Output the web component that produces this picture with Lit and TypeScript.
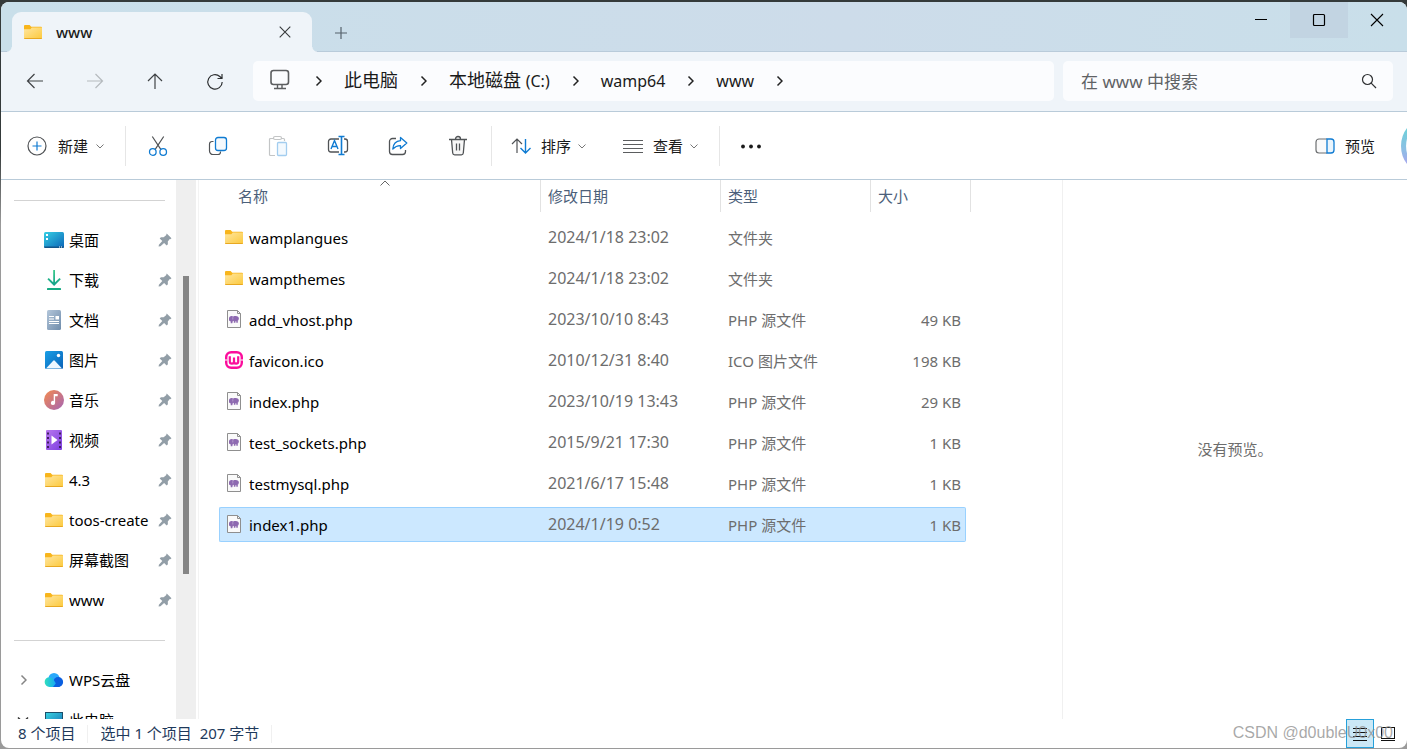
import { LitElement, html, css, svg, nothing } from "lit";
import { customElement, state } from "lit/decorators.js";
import { classMap } from "lit/directives/class-map.js";

type Kind = "folder" | "php" | "wamp";

interface FileRow {
  name: string;
  kind: Kind;
  date: string;
  type: string;
  size: string;
}

const FILES: FileRow[] = [
  { name: "wamplangues", kind: "folder", date: "2024/1/18 23:02", type: "文件夹", size: "" },
  { name: "wampthemes", kind: "folder", date: "2024/1/18 23:02", type: "文件夹", size: "" },
  { name: "add_vhost.php", kind: "php", date: "2023/10/10 8:43", type: "PHP 源文件", size: "49 KB" },
  { name: "favicon.ico", kind: "wamp", date: "2010/12/31 8:40", type: "ICO 图片文件", size: "198 KB" },
  { name: "index.php", kind: "php", date: "2023/10/19 13:43", type: "PHP 源文件", size: "29 KB" },
  { name: "test_sockets.php", kind: "php", date: "2015/9/21 17:30", type: "PHP 源文件", size: "1 KB" },
  { name: "testmysql.php", kind: "php", date: "2021/6/17 15:48", type: "PHP 源文件", size: "1 KB" },
  { name: "index1.php", kind: "php", date: "2024/1/19 0:52", type: "PHP 源文件", size: "1 KB" },
];

const box = (w: number, h: number, body: unknown) =>
  html`<svg width=${w} height=${h} viewBox="0 0 ${w} ${h}" fill="none" aria-hidden="true">${body}</svg>`;

const folder = () => box(20, 20, svg`
  <defs><linearGradient id="fg" x1="0" y1="0" x2="1" y2="1"><stop offset="0" stop-color="#ffe6a0"/><stop offset="1" stop-color="#fcc93c"/></linearGradient></defs>
  <path d="M1 4a1 1 0 0 1 1-1h4.6l1.6 1.8H18a1 1 0 0 1 1 1V8H1z" fill="#f8b51c"/>
  <path d="M1 7.2h6.4l1.4-1.6H19V16a1 1 0 0 1-1 1H2a1 1 0 0 1-1-1z" fill="url(#fg)"/>
  <path d="M1 16h18a1 1 0 0 1-1 1H2a1 1 0 0 1-1-1z" fill="#e8a821"/>`);

const php = () => box(20, 20, svg`
  <path d="M3.500 1.500h10l3 3v14h-13z" fill="#fafafa" stroke="#8f8f8f"/>
  <path d="M13.500 1.500v3h3" stroke="#8f8f8f"/>
  <path d="M5 9.500C5 8 6 7 7.500 7c.9 0 1.300.3 1.700.6C10 7 10.800 7 11.800 7c1.900 0 3.100 1 3.100 2.600l-.5 1.600-.6.200v2.300h-1.500v-1.500h-.9v1.500H9.800v-1.700l-.9-.3-.6 2.500H6.700v-1.600L5 11.500z" fill="#8d69b0"/>
  <path d="M8.800 8.200v2.300" stroke="#c9b8da" stroke-width=".6"/>`);

const wamp = () => box(20, 20, svg`
  <rect x="2.200" y="2.200" width="15.600" height="15.600" rx="5" fill="#fff" stroke="#fb0d9c" stroke-width="2.400"/>
  <path d="M1 10h2.500M16.500 10H19" stroke="#fff" stroke-width="1.200"/>
  <path d="M5.800 6.200v5.300a2.100 2.100 0 0 0 4.200 0V7.500M10 11.500a2.100 2.100 0 0 0 4.200 0V6.200" stroke="#fb0d9c" stroke-width="2.200"/>`);

const desktop = () => box(20, 20, svg`
  <defs><linearGradient id="dg" x1="0" y1="0" x2="1" y2="1"><stop offset="0" stop-color="#35cfe4"/><stop offset="1" stop-color="#0c65b8"/></linearGradient></defs>
  <rect y="2" width="20" height="16" rx="1.500" fill="url(#dg)"/>
  <path d="M0 16.500h20a1.500 1.500 0 0 1-1.500 1.500h-17A1.500 1.500 0 0 1 0 16.500z" fill="#13558a"/>
  <path d="M2 4h2v2H2zM2 8h2v2H2z" fill="#fff"/><path d="M15 17h1M17 17h1" stroke="#fff"/>`);

const download = () => box(20, 20, svg`
  <defs><linearGradient id="wg" x1="0" y1="0" x2="0" y2="1"><stop offset="0" stop-color="#3ccb8c"/><stop offset="1" stop-color="#12a08a"/></linearGradient></defs>
  <path d="M9.200 0h1.800v12.300l4.500-4.400 1.300 1.300-6.700 6.700L3.400 9.200l1.300-1.300 4.500 4.400z" fill="url(#wg)"/>
  <rect x="3" y="18" width="14" height="2" rx=".6" fill="#17ab83"/>`);

const doc = () => box(20, 20, svg`
  <defs><linearGradient id="og" x1="0" y1="0" x2="1" y2="1"><stop offset="0" stop-color="#b3c6da"/><stop offset="1" stop-color="#6f8cab"/></linearGradient></defs>
  <rect x="3" width="14" height="20" rx="1.500" fill="url(#og)"/>
  <path d="M5 6.500h5M5 9h5M5 11.500h10M5 13.500h10" stroke="#fff" stroke-width="1.200"/><path d="M11.500 6H15v3.500h-3.500z" fill="#fff"/>`);

const picture = () => box(20, 20, svg`
  <defs><linearGradient id="pg" x1="0" y1="0" x2="1" y2="1"><stop offset="0" stop-color="#199fe6"/><stop offset="1" stop-color="#0b62b8"/></linearGradient></defs>
  <rect x="1" y="1" width="18" height="18" rx="1.500" fill="url(#pg)"/>
  <path d="M2 18.500l7.200-7.800a1.100 1.100 0 0 1 1.600 0L18 18.500z" fill="#eef7ff"/><circle cx="14.500" cy="5.500" r="1.700" fill="#fff"/>`);

const music = () => box(20, 20, svg`
  <defs><linearGradient id="mg" x1="0" y1="0" x2="1" y2="1"><stop offset="0" stop-color="#f48b4e"/><stop offset="1" stop-color="#a564b4"/></linearGradient></defs>
  <circle cx="10" cy="10" r="10" fill="url(#mg)"/>
  <path d="M9.700 4h4v2.300h-2.600v6.600a2.100 2.100 0 1 1-1.400-2z" fill="#fff"/>`);

const video = () => box(20, 20, svg`
  <defs><linearGradient id="vg" x1="0" y1="0" x2="1" y2="1"><stop offset="0" stop-color="#b877ee"/><stop offset="1" stop-color="#7d3fe0"/></linearGradient></defs>
  <rect x="2" width="16" height="20" rx="1" fill="url(#vg)"/>
  <path d="M4 2.500v16M16 2.500v16" stroke="#40205f" stroke-width="2" stroke-dasharray="2 2.500"/>
  <path d="M7.500 5.500l6 4.500-6 4.500z" fill="#fff"/>`);

const cloud = () => box(20, 20, svg`
  <defs><linearGradient id="cg" x1="0" y1="0" x2="1" y2="0"><stop offset="0" stop-color="#2fe0bd"/><stop offset="1" stop-color="#129cff"/></linearGradient></defs>
  <circle cx="10" cy="8.500" r="5.500" fill="#2aa9fb"/><circle cx="14.200" cy="12" r="4.900" fill="#0a5fe0"/>
  <path d="M5.500 7.200c2 0 3 .8 4 2.300l4.500 7.400H5.500a4.850 4.850 0 0 1 0-9.700z" fill="url(#cg)"/>
  <path d="M9 16.900l5.200-6.500 2 6.100-2 .4z" fill="#0a5fe0"/>`);

const pc = () => box(20, 20, svg`
  <defs><linearGradient id="kg" x1="0" y1="0" x2="1" y2="1"><stop offset="0" stop-color="#38d4e0"/><stop offset="1" stop-color="#1673b8"/></linearGradient></defs>
  <rect x="1.500" y="2.500" width="17" height="13" fill="url(#kg)" stroke="#1a4f6b"/>`);

const pin = () => box(14, 14, svg`
  <path d="M8.700.5l4.800 4.800-1.200.9-.5-.1-2 2.500.1 2.700-1.200 1.200-2.600-2.600-3.600 3.400-1.900.3.300-1.900L4.300 8 1.700 5.400l1.200-1.200 2.700.1 2.500-2.100z" fill="#929ea7"/>`);

const chevR = (color: string) => box(7, 12, svg`<path d="M1.500 1.500L6 6l-4.500 4.500" stroke=${color} stroke-width="1.500"/>`);
const chevD = () => box(8, 8, svg`<path d="M.5 2.500L4 6l3.500-3.500" stroke="#777"/>`);

const S = "#505356";
const B = "#0f7bd2";
const T = {
  back: box(20, 20, svg`<path d="M18 10H2.500M9.500 3l-7 7 7 7" stroke="#3f4245" stroke-width="1.200"/>`),
  forward: box(20, 20, svg`<path d="M2 10h15.500M10.500 3l7 7-7 7" stroke="#b5babe" stroke-width="1.200"/>`),
  up: box(20, 20, svg`<path d="M10 18V3M3 10l7-7 7 7" stroke="#3f4245" stroke-width="1.200"/>`),
  reload: box(20, 20, svg`<path d="M17.200 11A7.200 7.200 0 1 1 14.800 5.500L17 7.500M17 3v4.500h-4.500" stroke="#2d2f31" stroke-width="1.200"/>`),
  monitor: box(22, 22, svg`<rect x="2" y="1.500" width="17.500" height="14" rx="2.500" stroke="#5c5e60" stroke-width="1.600"/><path d="M8.500 16v3M13 16v3M5 19.500h12" stroke="#5c5e60" stroke-width="1.400"/>`),
  search: box(16, 16, svg`<circle cx="6.500" cy="6.500" r="5" stroke="#2f3133" stroke-width="1.200"/><path d="M10.200 10.200L15 15" stroke="#2f3133" stroke-width="1.200"/>`),
  add: box(20, 20, svg`<circle cx="10" cy="10" r="9" stroke="#505356" stroke-width="1.200"/><path d="M10 5.500v9M5.500 10h9" stroke="#0f7bd2" stroke-width="1.200"/>`),
  cut: box(20, 22, svg`<path d="M4.300 1.500l8.500 12.800M15.700 1.500L7.200 14.300" stroke=${S} stroke-width="1.200"/><circle cx="4.800" cy="17" r="3.300" stroke=${B} stroke-width="1.300"/><circle cx="15.200" cy="17" r="3.300" stroke=${B} stroke-width="1.300"/>`),
  copy: box(20, 20, svg`<path d="M5.500 5.500H4a2.500 2.500 0 0 0-2.500 2.500v7A3.500 3.500 0 0 0 5 18.500h5a2.500 2.500 0 0 0 2.500-2.500v-.5" stroke=${S} stroke-width="1.200"/><rect x="7.500" y="1.500" width="11" height="13" rx="2.500" fill="#f4f9fd" stroke=${B} stroke-width="1.300"/>`),
  paste: box(20, 22, svg`<path d="M6 3.500H2.500a1 1 0 0 0-1 1v15a1 1 0 0 0 1 1H7M13 3.500h2.500a1 1 0 0 1 1 1V6" stroke="#c3c5c6" stroke-width="1.200"/><rect x="5.500" y="1.500" width="8" height="3" rx="1.500" stroke="#c3c5c6" stroke-width="1.200"/><rect x="9.500" y="7.500" width="9" height="13" rx="1" fill="#f3f9fe" stroke="#a3cdef" stroke-width="1.300"/>`),
  rename: box(22, 22, svg`<path d="M12 4H4a2.500 2.500 0 0 0-2.500 2.500v8A2.500 2.500 0 0 0 4 17h8M17 4h1a2.500 2.500 0 0 1 2.500 2.500v8A2.500 2.500 0 0 1 18 17h-1" stroke=${S} stroke-width="1.300"/><path d="M14.500 1.500v18M11.500 1.500h6M11.500 19.500h6" stroke=${B} stroke-width="1.600"/><path d="M4 14l3.500-8.500L11 14M5.200 11.500h4.600" stroke=${B} stroke-width="1.400"/>`),
  share: box(20, 20, svg`<path d="M8 2.500H4.500a3 3 0 0 0-3 3v10a3 3 0 0 0 3 3h10a3 3 0 0 0 3-3V14" stroke=${S} stroke-width="1.300"/><path d="M12.500 1.500L18.800 7l-6.300 5.500V9.600C9 9.400 7 10.700 4.800 13c.4-4.600 3-8 7.700-8.300z" fill="#fff" stroke=${B} stroke-width="1.300" stroke-linejoin="round"/>`),
  trash: box(20, 22, svg`<path d="M3.500 4.500l1.200 13.500a2 2 0 0 0 2 1.800h6.600a2 2 0 0 0 2-1.800l1.200-13.500" fill="#f7f7f7" stroke=${S} stroke-width="1.300"/><path d="M1 4.500h18M7.500 4a2.500 2.500 0 0 1 5 0M8.500 8.500v7M11.500 8.500v7" stroke=${S} stroke-width="1.300"/>`),
  sort: box(20, 20, svg`<path d="M6 17V3M1 8l5-5 5 5" stroke=${S} stroke-width="1.200"/><path d="M14.500 3v14M9.500 12l5 5 5-5" stroke=${B} stroke-width="1.400"/>`),
  lines: box(20, 20, svg`<path d="M0 4.500h20M0 8.500h20M0 12.500h20M0 16.500h20" stroke="#5b5d5f"/>`),
  dots: box(20, 20, svg`<circle cx="2" cy="10.500" r="1.900" fill="#1b1b1b"/><circle cx="10" cy="10.500" r="1.900" fill="#1b1b1b"/><circle cx="18" cy="10.500" r="1.900" fill="#1b1b1b"/>`),
  pane: box(20, 16, svg`<path d="M12 1H4a3 3 0 0 0-3 3v8a3 3 0 0 0 3 3h8" fill="#fafafa" stroke="#6c6e70" stroke-width="1.200"/><path d="M12 1h4a3 3 0 0 1 3 3v8a3 3 0 0 1-3 3h-4z" fill="#eaf5fd" stroke=${B} stroke-width="1.300"/>`),
  avatar: box(60, 60, svg`<defs><linearGradient id="ag" x1="0" y1="0" x2="0" y2="1"><stop offset=".2" stop-color="#6fcfda"/><stop offset=".55" stop-color="#8cc0e4"/><stop offset=".8" stop-color="#a3a9ec"/></linearGradient></defs><circle cx="30" cy="30" r="27.500" fill="#f4fafd" stroke="url(#ag)" stroke-width="5"/>`),
  plus: box(14, 14, svg`<path d="M7 1v12M1 7h12" stroke="#55616b" stroke-width="1.200"/>`),
  tabX: box(12, 12, svg`<path d="M.7.7l10.600 10.600M11.300.7L.7 11.300" stroke="#36393c" stroke-width="1.100"/>`),
  min: box(14, 14, svg`<path d="M1 6.500h12" stroke="#000"/>`),
  max: box(14, 14, svg`<rect x="1.500" y="1.500" width="11" height="11" rx="1" stroke="#000" stroke-width="1.200"/>`),
  close: box(14, 14, svg`<path d="M1 1l12 12M13 1L1 13" stroke="#000" stroke-width="1.100"/>`),
  caret: box(10, 6, svg`<path d="M.5 5.500L5 1l4.500 4.500" stroke="#666"/>`),
  details: box(14, 14, svg`<path d="M0 1.500h14M0 5.500h14M0 9.500h14M0 13.500h14" stroke="#111"/>`),
  thumbs: box(14, 14, svg`<rect x=".5" y=".5" width="13" height="11" fill="#fff" stroke="#111"/><path d="M0 13.500h14" stroke="#111"/>`),
};

const PLACES = [
  { label: "桌面", icon: desktop },
  { label: "下载", icon: download },
  { label: "文档", icon: doc },
  { label: "图片", icon: picture },
  { label: "音乐", icon: music },
  { label: "视频", icon: video },
  { label: "4.3", icon: folder },
  { label: "toos-create", icon: folder },
  { label: "屏幕截图", icon: folder },
  { label: "www", icon: folder },
];

const CRUMBS = [
  html`此电脑`,
  html`本地磁盘 <span class="latin">(C:)</span>`,
  html`<span class="latin">wamp64</span>`,
  html`<span class="latin">www</span>`,
];
const KIND_ICON = { folder, php, wamp };

@customElement("app-root")
export class AppRoot extends LitElement {
  @state() private selected = "index1.php";

  static styles = css`
    :host {
      display: flex;
      flex-direction: column;
      box-sizing: border-box;
      height: 100vh;
      padding: 2px 0 1px 1px;
      background: linear-gradient(#343a3a 0 20%, #9a9a9a 30%);
      font: 15px/20px "Noto Sans", "Noto Sans CJK SC", sans-serif;
      color: #1a1a1a;
      overflow: hidden;
    }
    * { box-sizing: border-box; }
    svg { display: block; flex: none; }
    button, input {
      font: inherit;
      color: inherit;
      border: 0;
      padding: 0;
      margin: 0;
      background: none;
    }
    button { display: flex; align-items: center; justify-content: center; }
    a { color: inherit; text-decoration: none; }
    .window {
      flex: 1;
      min-height: 0;
      display: flex;
      flex-direction: column;
      background: #fff;
      border-radius: 8px;
      overflow: hidden;
      position: relative;
    }
    .titlebar {
      display: flex;
      align-items: flex-start;
      height: 50px;
      padding-left: 11px;
      background: linear-gradient(90deg, #c9dfea, #cddcea 60%, #c9dfea);
      box-shadow: inset 0 -1px #b9cbda;
    }
    .tab {
      position: relative;
      display: flex;
      align-items: center;
      width: 300px;
      height: 40px;
      margin-top: 10px;
      padding: 0 21px 0 11px;
      border-radius: 9px 9px 0 0;
      background: #eff4f9;
    }
    .tab::before, .tab::after {
      content: "";
      position: absolute;
      bottom: 0;
      width: 5px;
      height: 5px;
    }
    .tab::before { right: 100%; background: radial-gradient(circle at 0 0, transparent 4px, #eff4f9 5px); }
    .tab::after { left: 100%; background: radial-gradient(circle at 100% 0, transparent 4px, #eff4f9 5px); }
    .tab-name { flex: 1; margin-left: 13px; font-weight: 500; }
    .newtab { width: 36px; height: 36px; margin: 13px 0 0 11px; }
    .controls { display: flex; margin: 0 1px 0 auto; }
    .controls button { width: 58px; height: 36px; }
    .controls .hot { background: #c2d4e2; }
    .nav {
      display: flex;
      align-items: center;
      height: 60px;
      padding: 0 14px 1px;
      background: #eff4f9;
      border-bottom: 1px solid #b9cbd9;
      font-size: 18px;
      line-height: 24px;
    }
    .history { display: flex; gap: 20px; margin-right: 18px; }
    .history button { width: 40px; height: 40px; }
    .address, .search {
      display: flex;
      align-items: center;
      height: 40px;
      border-radius: 5px;
      background: #fbfcfe;
    }
    .address { flex: 1; gap: 22px; padding: 0 16px; margin-right: 9px; }
    .address a { margin-bottom: 2px; }
    .address > svg:first-of-type { margin: 0 2px 2px 0; }
    .latin { font-size: 16px; }
    .search { width: 330px; padding: 0 16px 0 18px; }
    .search input { flex: 1; min-width: 0; height: 32px; outline: 0; font-size: 17px; }
    .search input::placeholder { color: #5f6265; opacity: 1; }
    .toolbar {
      display: flex;
      align-items: center;
      height: 68px;
      padding-left: 26px;
      border-bottom: 1px solid #b9cbd9;
      overflow: hidden;
    }
    .cmd { height: 40px; gap: 10px; }
    .cmd.new { gap: 11px; }
    .cmd .chev { margin-left: -3px; }
    .rule { flex: none; width: 1px; height: 40px; background: #e6e6e6; margin: 0 21px; }
    .rule.near { margin: 0 19px 0 22px; }
    .tools { display: flex; gap: 20px; margin: 0 -9px; }
    .tools button { width: 40px; height: 40px; }
    .gap { width: 37px; }
    .right { margin-left: auto; }
    .avatar { width: 6px; flex: none; margin-left: 26px; height: 60px; overflow: hidden; }
    .body { flex: 1; min-height: 0; display: flex; }
    .side { width: 175px; overflow: hidden; color: #000; }
    .side hr { border: 0; height: 1px; background: #d3d3d3; margin: 20px 11px 19px 13px; }
    .place { display: flex; align-items: center; height: 40px; padding: 0 4px 0 16px; }
    .twist { display: flex; justify-content: center; width: 12px; flex: none; margin-right: 15px; }
    .place .label { flex: 1; min-width: 0; margin: 0 3px 0 5px; overflow: hidden; white-space: nowrap; }
    .track { width: 20px; flex: none; background: #efefef; display: flex; justify-content: center; padding-top: 96px; }
    .thumb { width: 6px; height: 298px; background: #858585; }
    .list { flex: 1; min-width: 0; margin-left: 2px; padding-left: 20px; border-left: 1px solid #f3f3f3; overflow: hidden; }
    table { table-layout: fixed; width: 752px; border-collapse: collapse; }
    th, td { padding: 0; text-align: left; vertical-align: top; font-weight: 400; }
    thead tr { height: 37px; }
    tbody tr { height: 41px; }
    .c-name { width: 322px; }
    .c-date { width: 180px; }
    .c-type { width: 150px; }
    .c-size { width: 100px; }
    .head {
      position: relative;
      display: flex;
      align-items: center;
      height: 32px;
      padding-left: 7px;
      border-right: 1px solid #e2e2e2;
      color: #4c607a;
    }
    .head.first { padding-left: 19px; }
    .caret { position: absolute; top: 0; left: 161px; }
    .cell {
      display: flex;
      align-items: center;
      height: 35px;
      margin-top: 3px;
      padding-left: 7px;
      border: solid transparent;
      border-width: 1px 0;
      color: #6d6d6d;
    }
    .cell.name { border-left-width: 1px; padding-left: 4px; gap: 5px; color: #000; }
    .cell.name svg { margin-bottom: 2px; }
    .cell.date { font-size: 16px; padding-bottom: 1px; }
    .cell.size { justify-content: flex-end; margin-right: 5px; padding-right: 4px; border-right-width: 1px; }
    .sel .cell { background: #cce8ff; border-color: #99d1ff; }
    .sel .cell.name { border-radius: 2px 0 0 2px; }
    .sel .cell.size { border-radius: 0 2px 2px 0; }
    .preview {
      width: 345px;
      display: flex;
      align-items: center;
      justify-content: center;
      padding-bottom: 2px;
      border-left: 1px solid #f0f0f0;
      color: #6d6d6d;
    }
    .status { display: flex; align-items: center; height: 29px; padding-left: 17px; color: #1e395b; }
    .status span { margin-bottom: 2px; }
    .status .bar { width: 1px; height: 18px; background: #f0f0f0; margin: 0 12px; }
    .views { display: flex; margin: 0 5px 0 auto; }
    .views button { width: 28px; height: 29px; }
    .views .on { border: 1px solid #26a0da; background: #cbe8f6; }
    .mark {
      position: absolute;
      right: 14px;
      bottom: 4px;
      font: 16px/22px "Liberation Sans", sans-serif;
      color: #8c8c8cc0;
    }
  `;

  private place(label: string, icon: () => unknown, pinned: boolean, twist: unknown = nothing) {
    return html`<a class="place" href="#">
      <span class="twist">${twist}</span>${icon()}
      <span class="label">${label}</span>${pinned ? pin() : nothing}
    </a>`;
  }

  render() {
    return html`
      <div class="window">
        <header class="titlebar">
          <div class="tab">
            ${folder()}<span class="tab-name">www</span>
            <button aria-label="关闭标签页">${T.tabX}</button>
          </div>
          <button class="newtab" aria-label="新标签页">${T.plus}</button>
          <div class="controls">
            <button aria-label="最小化">${T.min}</button>
            <button class="hot" aria-label="最大化">${T.max}</button>
            <button aria-label="关闭">${T.close}</button>
          </div>
        </header>

        <div class="nav">
          <div class="history">
            <button aria-label="后退">${T.back}</button>
            <button aria-label="前进" disabled>${T.forward}</button>
            <button aria-label="向上">${T.up}</button>
            <button aria-label="刷新">${T.reload}</button>
          </div>
          <nav class="address">
            ${T.monitor}${chevR("#222")}
            ${CRUMBS.map((c) => html`<a href="#">${c}</a>${chevR("#222")}`)}
          </nav>
          <div class="search">
            <input type="text" aria-label="搜索" placeholder="在 www 中搜索" />
            ${T.search}
          </div>
        </div>

        <div class="toolbar">
          <button class="cmd new">${T.add}<span>新建</span><span class="chev">${chevD()}</span></button>
          <span class="rule"></span>
          <div class="tools">
            <button aria-label="剪切">${T.cut}</button>
            <button aria-label="复制">${T.copy}</button>
            <button aria-label="粘贴" disabled>${T.paste}</button>
            <button aria-label="重命名">${T.rename}</button>
            <button aria-label="共享">${T.share}</button>
            <button aria-label="删除">${T.trash}</button>
          </div>
          <span class="rule near"></span>
          <button class="cmd">${T.sort}<span>排序</span><span class="chev">${chevD()}</span></button>
          <span class="gap"></span>
          <button class="cmd">${T.lines}<span>查看</span><span class="chev">${chevD()}</span></button>
          <span class="rule"></span>
          <button class="cmd" aria-label="更多">${T.dots}</button>
          <button class="cmd right">${T.pane}<span>预览</span></button>
          <div class="avatar">${T.avatar}</div>
        </div>

        <div class="body">
          <aside class="side">
            <hr />
            ${PLACES.map((p) => this.place(p.label, p.icon, true))}
            <hr />
            ${this.place("WPS云盘", cloud, false, chevR("#858585"))}
            ${this.place("此电脑", pc, false, box(12, 8, svg`<path d="M1 1.500L6 6.500l5-5" stroke="#333" stroke-width="1.500"/>`))}
          </aside>
          <div class="track"><div class="thumb"></div></div>

          <main class="list">
            <table>
              <colgroup><col class="c-name" /><col class="c-date" /><col class="c-type" /><col class="c-size" /></colgroup>
              <thead>
                <tr>
                  <th><div class="head first">名称<span class="caret">${T.caret}</span></div></th>
                  <th><div class="head">修改日期</div></th>
                  <th><div class="head">类型</div></th>
                  <th><div class="head">大小</div></th>
                </tr>
              </thead>
              <tbody>
                ${FILES.map((f) => html`
                  <tr class=${classMap({ sel: f.name === this.selected })} @click=${() => (this.selected = f.name)}>
                    <td><div class="cell name">${KIND_ICON[f.kind]()}<span>${f.name}</span></div></td>
                    <td><div class="cell date">${f.date}</div></td>
                    <td><div class="cell">${f.type}</div></td>
                    <td><div class="cell size">${f.size}</div></td>
                  </tr>`)}
              </tbody>
            </table>
          </main>
          <section class="preview">没有预览。</section>
        </div>

        <footer class="status">
          <span>8 个项目</span><span class="bar"></span>
          <span>选中 1 个项目&nbsp; 207 字节</span><span class="bar"></span>
          <div class="views">
            <button class="on" aria-label="详细信息">${T.details}</button>
            <button aria-label="大缩略图">${T.thumbs}</button>
          </div>
        </footer>
        <div class="mark">CSDN @d0ubleU0x00</div>
      </div>
    `;
  }
}
